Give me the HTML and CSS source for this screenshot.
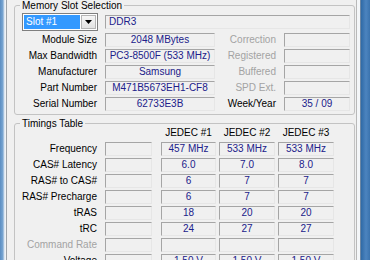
FILE: index.html
```html
<!DOCTYPE html>
<html>
<head>
<meta charset="utf-8">
<link rel="stylesheet" href="styles.css">
</head>
<body>
<div class="window">
  <div class="frame-l"></div>
  <div class="tabpage">
    <fieldset class="group group-slot">
      <legend>Memory Slot Selection</legend>
      <div class="info">
        <div class="combo">
          <span class="combo-sel">Slot #1</span>
          <span class="combo-btn"><svg width="7" height="4" viewBox="0 0 7 4"><path d="M0 0h7L3.5 4z" fill="#000"/></svg></span>
        </div>
        <div class="field field-type">DDR3</div>

        <div class="lbl">Module Size</div>
        <div class="field">2048 MBytes</div>
        <div class="lbl dis">Correction</div>
        <div class="field"></div>

        <div class="lbl">Max Bandwidth</div>
        <div class="field">PC3-8500F (533 MHz)</div>
        <div class="lbl dis">Registered</div>
        <div class="field"></div>

        <div class="lbl">Manufacturer</div>
        <div class="field">Samsung</div>
        <div class="lbl dis">Buffered</div>
        <div class="field"></div>

        <div class="lbl">Part Number</div>
        <div class="field">M471B5673EH1-CF8</div>
        <div class="lbl dis">SPD Ext.</div>
        <div class="field"></div>

        <div class="lbl">Serial Number</div>
        <div class="field">62733E3B</div>
        <div class="lbl">Week/Year</div>
        <div class="field">35 / 09</div>
      </div>
    </fieldset>

    <fieldset class="group group-timings">
      <legend>Timings Table</legend>
      <div class="timings">
        <div></div><div></div><div class="hdr">JEDEC #1</div><div class="hdr">JEDEC #2</div><div class="hdr">JEDEC #3</div>

        <div class="lbl">Frequency</div><div class="field f0"></div><div class="field f1">457 MHz</div><div class="field f2">533 MHz</div><div class="field f3">533 MHz</div>
        <div class="lbl">CAS# Latency</div><div class="field f0"></div><div class="field f1">6.0</div><div class="field f2">7.0</div><div class="field f3">8.0</div>
        <div class="lbl">RAS# to CAS#</div><div class="field f0"></div><div class="field f1">6</div><div class="field f2">7</div><div class="field f3">7</div>
        <div class="lbl">RAS# Precharge</div><div class="field f0"></div><div class="field f1">6</div><div class="field f2">7</div><div class="field f3">7</div>
        <div class="lbl">tRAS</div><div class="field f0"></div><div class="field f1">18</div><div class="field f2">20</div><div class="field f3">20</div>
        <div class="lbl">tRC</div><div class="field f0"></div><div class="field f1">24</div><div class="field f2">27</div><div class="field f3">27</div>
        <div class="lbl dis">Command Rate</div><div class="field f0"></div><div class="field f1"></div><div class="field f2"></div><div class="field f3"></div>
        <div class="lbl">Voltage</div><div class="field f0"></div><div class="field f1">1.50 V</div><div class="field f2">1.50 V</div><div class="field f3">1.50 V</div>
      </div>
    </fieldset>
  </div>
  <div class="frame-r"></div>
</div>
</body>
</html>
```

FILE: styles.css
```css
* { box-sizing: border-box; }
html, body { margin: 0; padding: 0; }
body {
  width: 370px;
  height: 260px;
  overflow: hidden;
  background: #f0f0f0;
  font-family: "Liberation Sans", Arial, sans-serif;
  font-size: 10px;
  color: #000;
}
.window {
  display: flex;
  height: 260px;
}
.frame-l {
  width: 7px;
  flex: none;
  background: linear-gradient(to right, #5a8dc2 0, #79a6d2 3px, #c9d9ea 4px, #eef2f6 5px, #eef2f6 6px, #9da3a9 6px, #9da3a9 7px);
}
.frame-r {
  width: 15px;
  flex: none;
  background: linear-gradient(to right, #f0f0f0 0, #f0f0f0 1px, #b9b9b9 1px, #b9b9b9 2px, #f4f6f8 2px, #f4f6f8 5px, #6b86a3 5px, #6b86a3 6px, #2f6aa6 6px, #4c84bf 11px, #3a73ae 15px);
}
.tabpage {
  flex: 1;
  padding-left: 7px;
  background: #f0f0f0;
}
.group {
  margin: 0;
  padding: 2px 4px 3px 0;
  border: 1px solid #c3c3c3;
  border-radius: 3px;
  min-width: 0;
}
.group legend {
  margin-left: 5px;
  padding: 0 2px;
  line-height: 11px;
  height: 11px;
}
.group-timings {
  margin-top: 3px;
  height: 160px;
}

.info {
  display: grid;
  grid-template-columns: 90px 110px 69px 66px;
  grid-template-rows: 18px repeat(5, 14px);
  row-gap: 2px;
}
.lbl {
  text-align: right;
  padding-right: 8px;
  line-height: 14px;
  white-space: nowrap;
}
.info .lbl:nth-child(4n) { padding-right: 9px; }
.dis { color: #a3a3a3; }

.field {
  height: 14px;
  border: 1px solid;
  border-color: #a5a5a5 #e6e6e6 #e6e6e6 #a5a5a5;
  background: #f0f0f0;
  color: #20208a;
  text-align: center;
  line-height: 12px;
  white-space: nowrap;
  overflow: hidden;
}
.field-type {
  grid-column: 2 / 5;
  align-self: center;
  text-align: left;
  padding-left: 3px;
}

.combo {
  margin-left: 7px;
  width: 76px;
  height: 18px;
  display: flex;
  border: 1px solid #7f7f7f;
  background: #fff;
  padding: 1px;
}
.combo-sel {
  flex: 1;
  background: #3399ff;
  color: #fff;
  line-height: 14px;
  padding-left: 2px;
}
.combo-btn {
  width: 15px;
  display: flex;
  align-items: center;
  justify-content: center;
  background: linear-gradient(#f6f6f6, #e2e2e2);
  border: 1px solid #b5b5b5;
  margin-left: 1px;
}

.timings {
  margin-top: -5px;
  display: grid;
  grid-template-columns: 90px 56px 58px 59px 56px;
  grid-auto-rows: 14px;
  row-gap: 2px;
}
.hdr {
  text-align: center;
  line-height: 14px;
  width: 56px;
}
.timings .hdr:nth-child(3) { width: 55px; }
.f0 { width: 47px; }
.f1 { width: 55px; }
.f2, .f3 { width: 56px; }
```
